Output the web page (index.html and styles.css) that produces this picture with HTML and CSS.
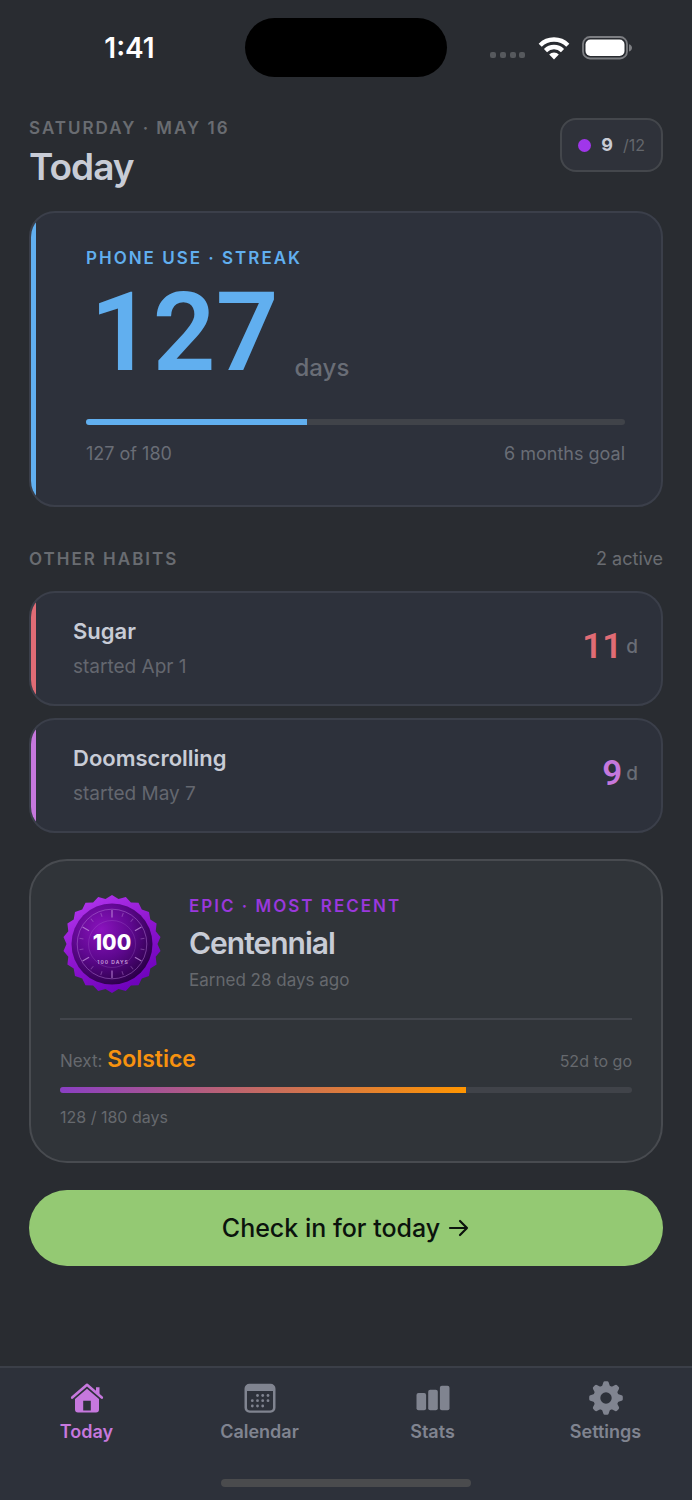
FILE: index.html
```html
<!DOCTYPE html>
<html lang="en">
<head>
  <meta charset="UTF-8">
  <meta name="viewport" content="width=device-width, initial-scale=1">
  <title>Today</title>
  <link rel="stylesheet" href="styles.css">
</head>
<body>

  <!-- Status bar -->
  <div class="status-bar">
    <span class="clock">1:41</span>
    <span class="island"></span>
    <div class="status-icons">
      <svg class="signal" width="36" height="8" viewBox="0 0 36 8" aria-hidden="true">
        <rect x="0" y="1" width="6" height="6" rx="2"/>
        <rect x="10" y="1" width="6" height="6" rx="2"/>
        <rect x="20" y="1" width="6" height="6" rx="2"/>
        <rect x="29" y="1" width="6" height="6" rx="2"/>
      </svg>
      <svg width="32" height="24" viewBox="0 0 32 24" aria-hidden="true">
        <g fill="none" stroke="#fff" stroke-width="4.4">
          <path d="M2.2 9.2a19.6 19.6 0 0 1 27.6 0"/>
          <path d="M7.5 14.6a12 12 0 0 1 17 0"/>
        </g>
        <path fill="#fff" d="M11.2 18.4a6.9 6.9 0 0 1 9.6 0L16 23.4z"/>
      </svg>
      <svg width="51" height="24" viewBox="0 0 51 24" aria-hidden="true">
        <rect x="1" y="1" width="44" height="21.500" rx="7" fill="none" stroke="#7c7e82" stroke-width="1.800"/>
        <rect x="3.500" y="3.500" width="39" height="16.500" rx="5" fill="#fff"/>
        <path d="M47 8.200c4 1 4 6.200 0 7.200z" fill="#7c7e82"/>
      </svg>
    </div>
  </div>

  <main>
    <header class="page-header">
      <div>
        <p class="eyebrow">SATURDAY · MAY 16</p>
        <h1>Today</h1>
      </div>
      <button class="badge-count" type="button">
        <span class="dot"></span>
        <strong>9</strong>
        <span class="total">/12</span>
      </button>
    </header>

    <!-- Main streak -->
    <section class="card hero blue">
      <span class="stripe"></span>
      <div class="hero-body">
        <h2 class="eyebrow">PHONE USE · STREAK</h2>
        <p class="hero-count"><span class="number">127</span><span class="unit">days</span></p>
        <div class="track"><div class="fill" style="width: 41%"></div></div>
        <div class="split">
          <span>127 of 180</span>
          <span>6 months goal</span>
        </div>
      </div>
    </section>

    <!-- Other habits -->
    <div class="section-title">
      <h2 class="eyebrow">OTHER HABITS</h2>
      <span>2 active</span>
    </div>
    <section class="habits">
      <article class="card habit red">
        <span class="stripe"></span>
        <div class="habit-info">
          <h3>Sugar</h3>
          <p>started Apr 1</p>
        </div>
        <p class="habit-days"><span class="number">11</span><span>d</span></p>
      </article>
      <article class="card habit purple">
        <span class="stripe"></span>
        <div class="habit-info">
          <h3>Doomscrolling</h3>
          <p>started May 7</p>
        </div>
        <p class="habit-days"><span class="number">9</span><span>d</span></p>
      </article>
    </section>

    <!-- Latest badge -->
    <section class="award">
      <div class="award-top">
        <svg class="medal" width="104" height="104" viewBox="-52 -52 104 104" role="img" aria-label="100 days badge">
          <defs>
            <linearGradient id="rim" x1="0.2" y1="0" x2="0.7" y2="1">
              <stop offset="0" stop-color="#b236ee"/>
              <stop offset="0.5" stop-color="#8f16cf"/>
              <stop offset="1" stop-color="#6a00ba"/>
            </linearGradient>
            <radialGradient id="face" cx="0.37" cy="0.32" r="0.72">
              <stop offset="0" stop-color="#8a13bd"/>
              <stop offset="0.5" stop-color="#5f0890"/>
              <stop offset="1" stop-color="#2b0048"/>
            </radialGradient>
          </defs>
          <polygon fill="url(#rim)" points="0,-49 6.5,-45 13.8,-47 18.9,-41.4 26.5,-41.2 29.8,-34.4 37,-32.1 38.3,-24.6 44.6,-20.4 43.7,-12.8 48.5,-7 45.5,0 48.5,7 43.7,12.8 44.6,20.4 38.3,24.6 37,32.1 29.8,34.4 26.5,41.2 18.9,41.4 13.8,47 6.5,45 0,49 -6.5,45 -13.8,47 -18.9,41.4 -26.5,41.2 -29.8,34.4 -37,32.1 -38.3,24.6 -44.6,20.4 -43.7,12.8 -48.5,7 -45.5,0 -48.5,-7 -43.7,-12.8 -44.6,-20.4 -38.3,-24.6 -37,-32.1 -29.8,-34.4 -26.5,-41.2 -18.9,-41.4 -13.8,-47 -6.5,-45"/>
          <circle r="40.500" fill="url(#face)"/>
          <g fill="none" stroke="#b274d4" stroke-width="0.7">
            <circle r="34.800" opacity="0.7"/>
            <circle r="23.500" opacity="0.35"/>
          </g>
          <g stroke="#c08ada">
            <g id="ticks">
              <path d="M0-34V-26.500" stroke-width="1.200" opacity="0.8"/>
              <path d="M0-33V-29" transform="rotate(20)" opacity="0.4"/>
              <path d="M0-33V-29" transform="rotate(40)" opacity="0.4"/>
            </g>
            <use href="#ticks" transform="rotate(60)"/>
            <use href="#ticks" transform="rotate(120)"/>
            <use href="#ticks" transform="rotate(180)"/>
            <use href="#ticks" transform="rotate(240)"/>
            <use href="#ticks" transform="rotate(300)"/>
          </g>
          <text class="medal-number" x="0" y="6">100</text>
          <text class="medal-label" x="1" y="20">100 DAYS</text>
        </svg>
        <div class="award-info">
          <p class="eyebrow">EPIC · MOST RECENT</p>
          <h2>Centennial</h2>
          <p>Earned 28 days ago</p>
        </div>
      </div>
      <div class="split next">
        <span>Next: <strong>Solstice</strong></span>
        <span class="note">52d to go</span>
      </div>
      <div class="track"><div class="fill sunset" style="width: 71%"></div></div>
      <p class="award-progress note">128 / 180 days</p>
    </section>

    <button class="check-in" type="button">
      Check in for today
      <svg width="22" height="20" viewBox="0 0 22 20" aria-hidden="true">
        <path d="M2 10h17M12 3l7 7-7 7" fill="none" stroke="currentColor" stroke-width="2.200" stroke-linecap="round" stroke-linejoin="round"/>
      </svg>
    </button>
  </main>

  <!-- Bottom tabs -->
  <footer>
    <nav>
      <a href="#today" class="active" aria-current="page">
        <svg width="36" height="36" viewBox="0 0 36 36" aria-hidden="true">
          <path d="M3.200 17.600 18 4.800l14.800 12.800" fill="none" stroke="currentColor" stroke-width="2.600" stroke-linecap="round" stroke-linejoin="round"/>
          <path fill="currentColor" d="M27 7.200h3.500v8L27 12z"/>
          <path fill="currentColor" fill-rule="evenodd" d="M18 8.700 30 19v10.500a3 3 0 0 1-3 3H9a3 3 0 0 1-3-3V19zM14.200 20.700V30.500h7.600v-9.800z"/>
        </svg>
        Today
      </a>
      <a href="#calendar">
        <svg width="36" height="36" viewBox="0 0 36 36" aria-hidden="true">
          <path fill="currentColor" fill-rule="evenodd" d="M7.500 3.800h21a5 5 0 0 1 5 5v19a5 5 0 0 1-5 5h-21a5 5 0 0 1-5-5v-19a5 5 0 0 1 5-5zM5 11v16.500a3 3 0 0 0 3 3h20a3 3 0 0 0 3-3V11z"/>
          <g fill="currentColor">
            <circle cx="15.500" cy="15.500" r="1.400"/><circle cx="20.700" cy="15.500" r="1.400"/><circle cx="26" cy="15.500" r="1.400"/>
            <circle cx="10.300" cy="20.700" r="1.400"/><circle cx="15.500" cy="20.700" r="1.400"/><circle cx="20.700" cy="20.700" r="1.400"/><circle cx="26" cy="20.700" r="1.400"/>
            <circle cx="10.300" cy="26" r="1.400"/><circle cx="15.500" cy="26" r="1.400"/><circle cx="20.700" cy="26" r="1.400"/>
          </g>
        </svg>
        Calendar
      </a>
      <a href="#stats">
        <svg width="36" height="36" viewBox="0 0 36 36" aria-hidden="true">
          <g fill="currentColor">
            <rect x="1.500" y="13" width="9.600" height="17.300" rx="2"/>
            <rect x="13.200" y="9.700" width="9.600" height="20.600" rx="2"/>
            <rect x="24.900" y="5.700" width="9.600" height="24.600" rx="2"/>
          </g>
        </svg>
        Stats
      </a>
      <a href="#settings">
        <svg width="36" height="36" viewBox="-18 -18 36 36" aria-hidden="true">
          <circle r="9.200" fill="none" stroke="currentColor" stroke-width="7"/>
          <g fill="currentColor">
            <g id="teeth">
              <path d="M-4.200-11-2.700-15.600q.4-1.200 1.500-1.200h2.400q1.100 0 1.500 1.200L4.200-11zM-4.200 11-2.700 15.600q.4 1.200 1.500 1.200h2.400q1.100 0 1.500-1.200L4.200 11z"/>
            </g>
            <use href="#teeth" transform="rotate(45)"/>
            <use href="#teeth" transform="rotate(90)"/>
            <use href="#teeth" transform="rotate(135)"/>
          </g>
        </svg>
        Settings
      </a>
    </nav>
    <div class="home-indicator"></div>
  </footer>

</body>
</html>
```
FILE: styles.css
```css
* { margin: 0; padding: 0; box-sizing: border-box; }

body {
  min-height: 100vh;
  display: flex;
  flex-direction: column;
  background: #292c31;
  color: #c8ccd6;
  font-family: Inter, "Liberation Sans", sans-serif;
  font-size: 18px;
  line-height: 24px;
}
button { font: inherit; color: inherit; cursor: pointer; }
a { color: inherit; text-decoration: none; }
svg { display: block; flex-shrink: 0; }

/* Status bar */
.status-bar {
  display: grid;
  grid-template-columns: 1fr auto 1fr;
  align-items: center;
  padding-top: 18px;
}
.clock {
  padding-left: 14px;
  text-align: center;
  color: #fff;
  font-size: 28px;
  font-weight: 600;
}
.island {
  width: 202px;
  height: 59px;
  border-radius: 30px;
  background: #000;
}
.status-icons {
  display: flex;
  justify-content: center;
  align-items: center;
  gap: 12px;
  padding-right: 16px;
}
.signal { fill: #56595d; margin-top: 14px; }

main {
  flex: 1;
  padding: 41px 29px 32px;
}
.eyebrow {
  font-size: 17px;
  line-height: 20px;
  font-weight: 600;
  letter-spacing: 2px;
}

/* Header */
.page-header {
  display: flex;
  justify-content: space-between;
  align-items: flex-start;
  margin-bottom: 21px;
}
.page-header .eyebrow { color: #696c71; }
h1 {
  margin-top: 6px;
  font-size: 37px;
  line-height: 46px;
  font-weight: 600;
  letter-spacing: -1px;
}
.badge-count {
  display: flex;
  align-items: center;
  gap: 10px;
  height: 54px;
  padding: 0 16px;
  border: 2px solid #44474c;
  border-radius: 16px;
  background: #2f323a;
}
.dot {
  width: 13px;
  height: 13px;
  border-radius: 50%;
  background: #a036ea;
}
.badge-count strong { font-weight: 700; }
.badge-count .total { color: #64676c; font-size: 16px; }

/* Cards */
.card {
  display: flex;
  overflow: hidden;
  border: 2px solid #3b3f4a;
  border-radius: 26px;
  background: #2d313b;
}
.stripe {
  width: 5px;
  background: var(--accent);
}
.blue { --accent: #61afef; }
.red { --accent: #e06c75; }
.purple { --accent: #c678dd; }
.number {
  color: var(--accent);
  font-family: Roboto, Inter, sans-serif;
  font-weight: 600;
}
.split {
  display: flex;
  justify-content: space-between;
  align-items: baseline;
  color: #696d76;
}
.track {
  height: 6px;
  overflow: hidden;
  border-radius: 3px;
  background: #404349;
}
.fill {
  height: 100%;
  background: var(--accent);
}

.hero-body {
  flex: 1;
  padding: 35px 36px 39px 50px;
}
.hero .eyebrow { color: var(--accent); }
.hero-count {
  display: flex;
  align-items: flex-end;
  gap: 16px;
  margin-bottom: 21px;
  padding-left: 4px;
}
.hero-count .number {
  font-size: 110px;
  line-height: 130px;
}
.unit {
  padding-bottom: 16px;
  color: #696d76;
  font-size: 24px;
  line-height: 28px;
  font-weight: 500;
}
.hero .split { margin-top: 17px; }

.section-title {
  display: flex;
  justify-content: space-between;
  align-items: center;
  margin: 40px 0 20px;
  color: #696c71;
}

.habits {
  display: grid;
  gap: 12px;
}
.habit-info {
  flex: 1;
  padding: 24px 0 25px 37px;
}
h3 {
  margin-bottom: 10px;
  font-size: 22px;
  line-height: 28px;
  font-weight: 600;
}
.habit-info p { color: #64676f; font-size: 19px; }
.habit-days {
  display: flex;
  align-items: center;
  gap: 4px;
  padding: 0 23px 3px 0;
  color: #696d76;
  font-size: 19px;
  font-weight: 500;
}
.habit-days .number {
  font-size: 35px;
  line-height: 40px;
}

/* Latest badge */
.award {
  margin: 26px 0 27px;
  padding: 31px 29px 32px;
  border: 2px solid #484b50;
  border-radius: 38px;
  background: #303439;
  color: #66696e;
  font-size: 17px;
}
.award-top {
  display: flex;
  align-items: center;
  gap: 25px;
  padding-bottom: 22px;
  border-bottom: 2px solid #42454c;
}
.award .eyebrow { color: #9a38dc; }
.award h2 {
  margin: 8px 0 6px;
  color: #c8ccd6;
  font-size: 30px;
  line-height: 38px;
  font-weight: 600;
  letter-spacing: -1px;
}
.medal-number,
.medal-label {
  fill: #fff;
  text-anchor: middle;
}
.medal-number { font-size: 21px; font-weight: 800; }
.medal-label { fill: #c9a3dc; font-size: 5px; font-weight: 600; letter-spacing: 1px; }
.next {
  margin: 27px 0 14px;
  color: inherit;
}
.next strong {
  color: #f7920f;
  font-size: 23px;
  font-weight: 600;
}
.note { font-size: 16px; }
.sunset { background: linear-gradient(90deg, #8a3fc4, #ff9500); }
.award-progress { margin-top: 12px; }

.check-in {
  display: flex;
  justify-content: center;
  align-items: center;
  gap: 8px;
  width: 100%;
  height: 76px;
  border: none;
  border-radius: 38px;
  background: #94c973;
  color: #0b130d;
  font-size: 25px;
  font-weight: 500;
}

/* Bottom tabs */
footer {
  padding: 12px 0 13px;
  border-top: 2px solid #3b3f48;
  background: #2d313a;
}
nav {
  display: grid;
  grid-template-columns: repeat(4, 1fr);
}
nav a {
  display: flex;
  flex-direction: column;
  align-items: center;
  gap: 4px;
  color: #808490;
  font-weight: 600;
}
nav .active { color: #c678dd; }
.home-indicator {
  width: 36%;
  height: 8px;
  margin: 35px auto 0;
  border-radius: 4px;
  background: #4a4b4d;
}
```
